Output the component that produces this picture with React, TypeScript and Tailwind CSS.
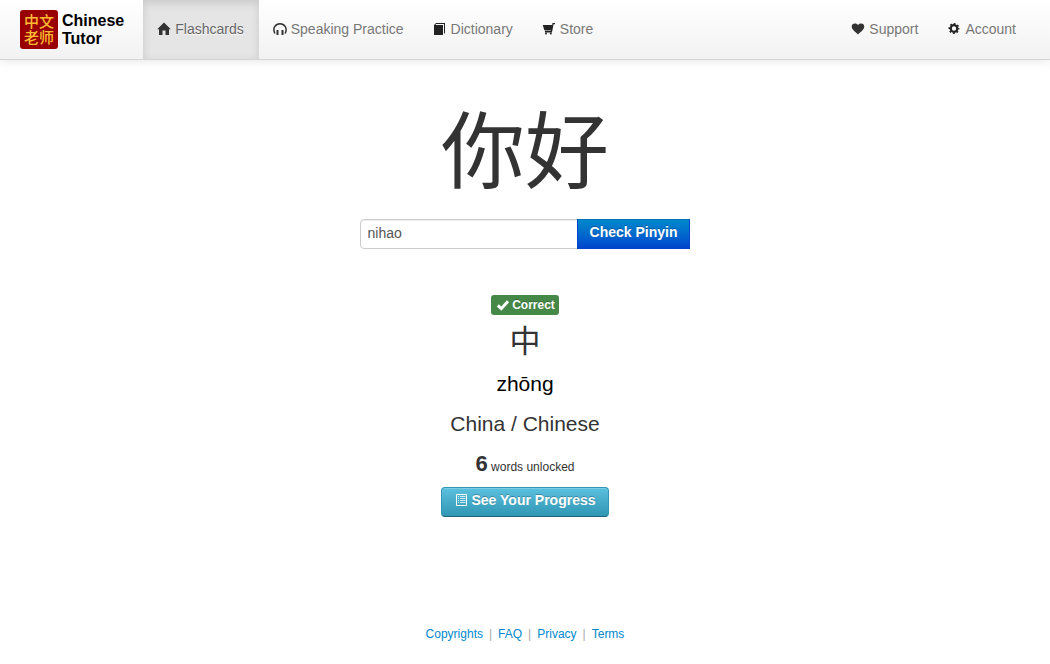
import { useState } from 'react';
import type { FormEvent, ReactNode } from 'react';

const HomeIcon = () => (
  <svg viewBox="0 0 14 14" className="h-3.5 w-3.5 shrink-0" fill="#333" aria-hidden="true">
    <path d="M7 .5 13.800 7.300H12V13H8.500V8.600h-3V13H2V7.300H.2Z" />
  </svg>
);

const HeadphonesIcon = () => (
  <svg viewBox="0 0 14 14" className="h-3.5 w-3.5 shrink-0" aria-hidden="true">
    <path d="M2 11.500C.6 9 .6 6.500 1.700 4.700 2.900 2.800 4.700 1.800 7 1.800s4.100 1 5.300 2.900c1.100 1.800 1.100 4.300-.3 6.800" fill="none" stroke="#333" strokeWidth="1.500" />
    <path d="M3.500 8h2v5h-2zM8.500 8h2v5h-2z" fill="#333" />
  </svg>
);

const BookIcon = () => (
  <svg viewBox="0 0 14 14" className="h-3.5 w-3.5 shrink-0" fill="#222" aria-hidden="true">
    <path d="M3 1h9v9.800l-1 1.200V2H3.200L2.200 3H10v10H1V3Z" />
  </svg>
);

const CartIcon = () => (
  <svg viewBox="0 0 14 14" className="h-3.5 w-3.5 shrink-0" fill="#222" aria-hidden="true">
    <path d="M10.500 1H13v1.200h-1.500L10.200 9.500H2.800V8.600H9L9.200 8H2.300L.7 3h9.500Z" />
    <path d="M3 9h7v1.500H3z" />
    <circle cx="4" cy="11.600" r="1" />
    <circle cx="8.800" cy="11.600" r="1" />
  </svg>
);

const HeartIcon = () => (
  <svg viewBox="0 0 14 14" className="h-3.5 w-3.5 shrink-0" fill="#333" aria-hidden="true">
    <path d="M7 12.600C5.600 10.900.7 8 .7 4.600.7 2.600 2.200 1.400 3.900 1.400 5.300 1.400 6.400 2.100 7 3.100 7.600 2.100 8.700 1.400 10.100 1.400c1.700 0 3.200 1.200 3.200 3.200C13.300 8 8.400 10.900 7 12.600Z" />
  </svg>
);

const CogIcon = () => (
  <svg viewBox="0 0 14 14" className="h-3.5 w-3.5 shrink-0" aria-hidden="true">
    <circle cx="7" cy="6.500" r="3.300" fill="none" stroke="#222" strokeWidth="2.200" />
    <circle cx="7" cy="6.500" r="4.700" fill="none" stroke="#222" strokeWidth="1.600" strokeDasharray="1.850 1.841" strokeDashoffset=".925" />
  </svg>
);

const CheckIcon = () => (
  <svg viewBox="0 0 14 14" className="h-3.5 w-3.5 shrink-0" aria-hidden="true">
    <path d="M1.800 7.400 5.300 10.700 12 3.200" fill="none" stroke="#fff" strokeWidth="3" />
  </svg>
);

const ListIcon = () => (
  <svg viewBox="0 0 14 14" className="h-3.5 w-3.5 shrink-0" fill="none" stroke="#fff" aria-hidden="true">
    <path d="M1.500 1.500h10v11h-10z" />
    <path d="M3 3.500h1M5 3.500h5.500M3 5.500h1M5 5.500h5.500M3 7.500h1M5 7.500h5.500M3 9.500h1M5 9.500h5.500" strokeOpacity=".75" />
  </svg>
);

interface NavItemProps {
  icon: ReactNode;
  label: string;
  active?: boolean;
}

const NavItem = ({ icon, label, active = false }: NavItemProps) => (
  <li>
    <a
      href="#"
      aria-current={active ? 'page' : undefined}
      className={`flex h-full items-center gap-1 pr-[15px] pb-0.5 pl-3.5 text-sm [text-shadow:0_1px_0_#fff] ${
        active ? 'bg-[#e5e5e5] text-[#666] shadow-[inset_0_3px_8px_rgba(0,0,0,0.125)]' : 'text-[#777]'
      }`}
    >
      {icon}
      {label}
    </a>
  </li>
);

const Logo = () => (
  <a href="#" className="mr-[19px] flex items-center gap-1 text-base leading-[18px] font-bold text-black">
    <span className="flex h-[39px] w-[38px] flex-col items-center justify-center rounded-[3px] bg-[#990000] font-['Liberation_Sans','Noto_Sans_CJK_SC',sans-serif] text-[15px] leading-4 font-medium text-[#fb3]">
      <span>中文</span>
      <span>老师</span>
    </span>
    <span>
      Chinese
      <br />
      Tutor
    </span>
  </a>
);

const footerLinks = ['Copyrights', 'FAQ', 'Privacy', 'Terms'];

export default function App() {
  const [pinyin, setPinyin] = useState('nihao');

  const handleSubmit = (e: FormEvent) => {
    e.preventDefault();
  };

  return (
    <div className="min-h-screen bg-white font-['Liberation_Sans',Arial,sans-serif] text-sm text-[#333]">
      <header className="flex h-15 justify-between border-b border-[#d4d4d4] bg-linear-to-b from-white to-[#f2f2f2] pr-[19px] pl-5 shadow-[0_1px_10px_rgba(0,0,0,0.1)]">
        <div className="flex">
          <Logo />
          <nav className="flex">
            <ul className="flex">
              <NavItem icon={<HomeIcon />} label="Flashcards" active />
              <NavItem icon={<HeadphonesIcon />} label="Speaking Practice" />
              <NavItem icon={<BookIcon />} label="Dictionary" />
              <NavItem icon={<CartIcon />} label="Store" />
            </ul>
          </nav>
        </div>
        <ul className="flex">
          <NavItem icon={<HeartIcon />} label="Support" />
          <NavItem icon={<CogIcon />} label="Account" />
        </ul>
      </header>

      <main className="flex flex-col items-center pt-9">
        <h1 className="font-['Noto_Sans_CJK_SC',sans-serif] text-[84px] leading-[100px]">你好</h1>

        <form onSubmit={handleSubmit} className="mt-[23px] flex">
          <input
            type="text"
            aria-label="Pinyin"
            value={pinyin}
            onChange={(e) => setPinyin(e.target.value)}
            className="h-[30px] w-[218px] rounded-l border border-[#ccc] px-[7px] pb-0.5 text-sm text-[#555] shadow-[inset_0_1px_1px_rgba(0,0,0,0.075)] outline-none"
          />
          <button
            type="submit"
            className="-ml-px h-[30px] border border-[#04c] border-t-[#0074b8] bg-linear-to-b from-[#08c] to-[#04c] px-3 pb-1 text-sm font-bold text-white [text-shadow:0_-1px_0_rgba(0,0,0,0.25)]"
          >
            Check Pinyin
          </button>
        </form>

        <span className="mt-[46px] flex h-5 items-center gap-0.5 rounded-[3px] bg-[#468847] pr-1 pl-[5px] text-xs font-bold text-white [text-shadow:0_-1px_0_rgba(0,0,0,0.25)]">
          <CheckIcon />
          Correct
        </span>
        <p className="mt-2 font-['Noto_Sans_CJK_SC',sans-serif] text-[31px] leading-8">中</p>
        <p className="mt-3.5 text-[21px] leading-[30px] text-black">zhōng</p>
        <p className="mt-2.5 text-[21px] leading-[30px]">China / Chinese</p>
        <p className="mt-2.5 text-xs leading-[30px]">
          <strong className="text-[22px]">6</strong> words unlocked
        </p>
        <button
          type="button"
          className="mt-[5px] flex h-[30px] items-center gap-[3px] rounded border border-[#2f96b4] border-b-[#1f6377] bg-linear-to-b from-[#5bc0de] to-[#2f96b4] px-[13px] pb-1 text-sm font-bold text-white shadow-[inset_0_1px_0_rgba(255,255,255,0.2)] [text-shadow:0_-1px_0_rgba(0,0,0,0.25)]"
        >
          <ListIcon />
          See Your Progress
        </button>
      </main>

      <footer className="mt-[107px] flex justify-center gap-1.5 text-xs leading-5">
        {footerLinks.map((label, i) => (
          <span key={label} className="flex gap-1.5">
            {i > 0 && <span className="text-[#aaa]">|</span>}
            <a href="#" className="text-[#08c]">
              {label}
            </a>
          </span>
        ))}
      </footer>
    </div>
  );
}
